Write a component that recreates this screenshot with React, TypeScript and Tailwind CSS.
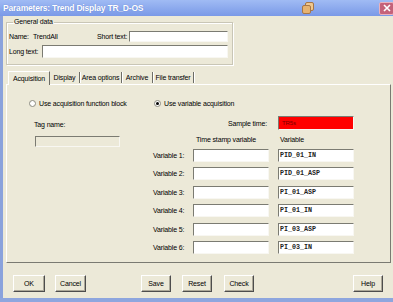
import React from "react";

const sunken =
  "border border-t-[#7b7b72] border-l-[#7b7b72] border-b-[#f8f7f2] border-r-[#f8f7f2]";
const raised =
  "border border-t-white border-l-white border-b-[#4d4d4d] border-r-[#4d4d4d] shadow-[inset_-1px_-1px_0_#aca899]";

const variables = ["PID_01_IN", "PID_01_ASP", "PI_01_ASP", "PI_01_IN", "PI_03_ASP", "PI_03_IN"];

const tabs = [
  { label: "Display", w: "w-[30px]" },
  { label: "Area options", w: "w-[42px]" },
  { label: "Archive", w: "w-[31px]" },
  { label: "File transfer", w: "w-[41px]" },
];

const Radio = ({ checked }: { checked?: boolean }) => (
  <span className="w-[7px] h-[7px] rounded-full bg-white border border-[#8b8b80] flex items-center justify-center shrink-0">
    {checked && <span className="w-[3px] h-[3px] rounded-full bg-black" />}
  </span>
);

const Button = ({ label, className }: { label: string; className: string }) => (
  <button className={`h-[17px] bg-[#ece9d8] ${raised} ${className} flex items-center justify-center`}>
    {label}
  </button>
);

export default function App() {
  return (
    <div className="w-[393px] h-[302px] bg-[#ece9d8] flex flex-col overflow-hidden whitespace-nowrap text-[7px] tracking-[-0.15px] leading-none text-black font-['Liberation_Sans',Arial,sans-serif]">
      {/* title bar */}
      <div className="h-[16px] shrink-0 flex items-center bg-gradient-to-b from-[#a0bbf4] to-[#7a99e7] overflow-hidden">
        <span className="pl-[3px] text-white font-bold text-[8.5px] tracking-[-0.2px] [text-shadow:0_0_1px_#5a78c8]">
          Parameters: Trend Display TR_D-OS
        </span>
        <svg width="13" height="14" viewBox="0 0 13 14" className="ml-auto mr-[65px]">
          <rect x="4.5" y="1.5" width="8" height="8" rx="1.5" fill="#f0c88e" stroke="#a67648" />
          <rect x="1.5" y="4.5" width="8" height="8" rx="1.5" fill="#e6b371" stroke="#a67648" />
        </svg>
        <div className="w-[15px] h-[13px] shrink-0 -mr-[1px] rounded-[2px] bg-[#c5627a] border border-[#e9b2be] flex items-center justify-center">
          <svg width="8" height="8" viewBox="0 0 8 8">
            <path d="M1 1L7 7M7 1L1 7" stroke="white" strokeWidth="1.6" />
          </svg>
        </div>
      </div>

      {/* body */}
      <div className="flex-1 flex flex-col border-l-[3px] border-[#8aa2dc]">
        {/* general data */}
        <fieldset className="ml-[3px] w-[227px] h-[49px] border border-[#c9c6b6] shadow-[inset_1px_1px_0_#fff,1px_1px_0_#fff] pl-[2px] pr-[4px]">
          <legend className="ml-[4px] px-[1px] h-[12px] leading-[12px]">General data</legend>
          <div className="mt-[3px] h-[11px] flex items-center">
            <span className="w-[24px]">Name:</span>
            <span className="w-[64px]">TrendAll</span>
            <span className="w-[32px]">Short text:</span>
            <div className={`flex-1 h-[11px] bg-white ${sunken}`} />
          </div>
          <div className="mt-[3px] h-[13px] flex items-center">
            <span className="w-[33px]">Long text:</span>
            <div className={`flex-1 h-[13px] bg-white ${sunken}`} />
          </div>
        </fieldset>

        {/* tabs */}
        <div className="mt-[5px] ml-[5px] h-[14px] flex items-end relative z-10">
          <div className="w-[42px] h-[14px] -mb-[1px] bg-[#ece9d8] border-t border-l border-white border-r border-r-[#6d6d66] flex items-center justify-center">
            Acquisition
          </div>
          {tabs.map((t) => (
            <div
              key={t.label}
              className={`${t.w} h-[11px] mb-[1px] border-r border-[#6d6d66] shadow-[1px_0_0_#fff] flex items-center justify-center`}
            >
              {t.label}
            </div>
          ))}
        </div>

        {/* tab panel */}
        <div className="ml-[3px] w-[385px] h-[179px] border border-t-white border-l-white border-r-[#7a7a72] border-b-[#7a7a72] flex flex-col">
          <div className="mt-[13px] pl-[22px] h-[10px] flex items-center">
            <div className="w-[125px] flex items-center gap-[3px]">
              <Radio />
              <span>Use acquisition function block</span>
            </div>
            <div className="flex items-center gap-[3px]">
              <Radio checked />
              <span>Use variable acquisition</span>
            </div>
          </div>

          <div className="mt-[8px] flex">
            <div className="w-[146px] pl-[27px] flex flex-col">
              <div className="mt-[3px] h-[10px] flex items-center">Tag name:</div>
              <div className={`mt-[7px] ml-[1px] w-[85px] h-[11px] bg-[#ece9d8] ${sunken}`} />
            </div>

            <div className="flex flex-col">
              <div className="h-[14px] flex items-center">
                <span className="w-[116px] text-right pr-[2px]">Sample time:</span>
                <div className={`ml-[9px] w-[76px] h-[14px] bg-[#ff0000] ${sunken} flex items-center pl-[3px] text-[6px] text-[#7a0000]`}>
                  TR5s
                </div>
              </div>
              <div className="h-[19px] flex items-center">
                <span className="w-[40px]" />
                <span className="w-[76px] pl-[3px]">Time stamp variable</span>
                <span className="ml-[9px] pl-[2px]">Variable</span>
              </div>
              <div className="flex flex-col gap-y-[5.4px]">
                {variables.map((v, i) => (
                  <div key={v} className="h-[13px] flex items-center">
                    <span className="w-[40px]">Variable {i + 1}:</span>
                    <div className={`w-[76px] h-[13px] bg-white ${sunken}`} />
                    <div
                      className={`ml-[9px] w-[76px] h-[13px] bg-white ${sunken} pl-[1px] pt-[2px] font-['Liberation_Mono',monospace] font-bold tracking-normal text-[6.7px] text-[#222]`}
                    >
                      {v}
                    </div>
                  </div>
                ))}
              </div>
            </div>
          </div>
        </div>

        {/* buttons */}
        <div className="mt-[12px] h-[17px] flex items-center">
          <Button label="OK" className="ml-[10px] w-[32px]" />
          <Button label="Cancel" className="ml-[10px] w-[31px]" />
          <Button label="Save" className="ml-[55px] w-[30px]" />
          <Button label="Reset" className="ml-[11px] w-[30px]" />
          <Button label="Check" className="ml-[12px] w-[30px]" />
          <Button label="Help" className="ml-auto mr-[10px] w-[30px]" />
        </div>
      </div>
      <div className="h-[4px] shrink-0 bg-[#8ea6de]" />
    </div>
  );
}
